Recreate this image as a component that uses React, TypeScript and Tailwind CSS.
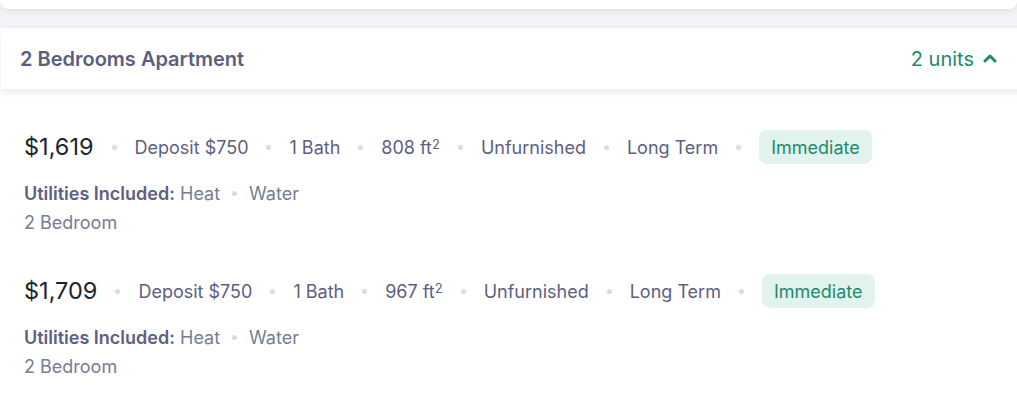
type Unit = {
  price: string;
  deposit: string;
  bath: string;
  area: string;
  furnished: string;
  term: string;
  availability: string;
  utilities: string[];
  bedroom: string;
};

const units: Unit[] = [
  {
    price: "$1,619",
    deposit: "Deposit $750",
    bath: "1 Bath",
    area: "808",
    furnished: "Unfurnished",
    term: "Long Term",
    availability: "Immediate",
    utilities: ["Heat", "Water"],
    bedroom: "2 Bedroom",
  },
  {
    price: "$1,709",
    deposit: "Deposit $750",
    bath: "1 Bath",
    area: "967",
    furnished: "Unfurnished",
    term: "Long Term",
    availability: "Immediate",
    utilities: ["Heat", "Water"],
    bedroom: "2 Bedroom",
  },
];

function Dot() {
  return <span className="w-[5px] h-[5px] rounded-full bg-[#d9dbe0] shrink-0" />;
}

function UnitRow({ unit }: { unit: Unit }) {
  return (
    <div className="pl-6">
      <div className="flex items-center gap-[18px] h-[34px]">
        <span className="text-[23.5px] text-[#1c2629] leading-none">{unit.price}</span>
        <Dot />
        <span className="text-[18px] text-[#5d6080]">{unit.deposit}</span>
        <Dot />
        <span className="text-[18px] text-[#5d6080]">{unit.bath}</span>
        <Dot />
        <span className="text-[18px] text-[#5d6080]">
          {unit.area} ft<sup className="text-[13px] relative -top-[5px]">2</sup>
        </span>
        <Dot />
        <span className="text-[18px] text-[#5d6080]">{unit.furnished}</span>
        <Dot />
        <span className="text-[18px] text-[#5d6080]">{unit.term}</span>
        <Dot />
        <span className="px-[12px] h-[34px] flex items-center rounded-lg bg-[#e2f2ec] text-[18px] text-[#1f8a6c]">
          {unit.availability}
        </span>
      </div>
      <div className="mt-[17px] flex items-center gap-[12px] text-[18px] h-[24px]">
        <span>
          <span className="font-semibold text-[#5d6080]">Utilities Included:</span>{" "}
          <span className="text-[#777d93]">{unit.utilities[0]}</span>
        </span>
        <Dot />
        <span className="text-[#777d93]">{unit.utilities[1]}</span>
      </div>
      <div className="mt-[6px] text-[18px] text-[#777d93] h-[24px] leading-[24px]">{unit.bedroom}</div>
    </div>
  );
}

export default function App() {
  return (
    <div className="min-h-screen bg-white font-['Inter',sans-serif] overflow-hidden">
      <div className="bg-[#f3f3f5] pb-[19px]">
        <div className="h-[9px] bg-white rounded-b-lg shadow-[0_2px_6px_rgba(0,0,0,0.08)]" />
      </div>
      <div className="ml-[1px] -mr-4 h-[61px] bg-white rounded-tl-lg shadow-[0_3px_8px_rgba(0,0,0,0.09)] flex items-center justify-between pl-[19px] pr-[36px] relative">
        <h2 className="text-[20px] font-semibold text-[#5b5e7e]">2 Bedrooms Apartment</h2>
        <button className="flex items-center gap-[9px] text-[20px] text-[#1f8a6c]">
          2 units
          <svg width="14" height="10" viewBox="0 0 14 10" fill="none" className="mt-[-2px]">
            <polyline points="2,8 7,3 12,8" stroke="#1f8a6c" strokeWidth="3" strokeLinecap="round" strokeLinejoin="round" />
          </svg>
        </button>
      </div>
      <div className="bg-white pt-[41px] flex flex-col gap-[39px]">
        {units.map((u, i) => (
          <UnitRow key={i} unit={u} />
        ))}
      </div>
    </div>
  );
}
